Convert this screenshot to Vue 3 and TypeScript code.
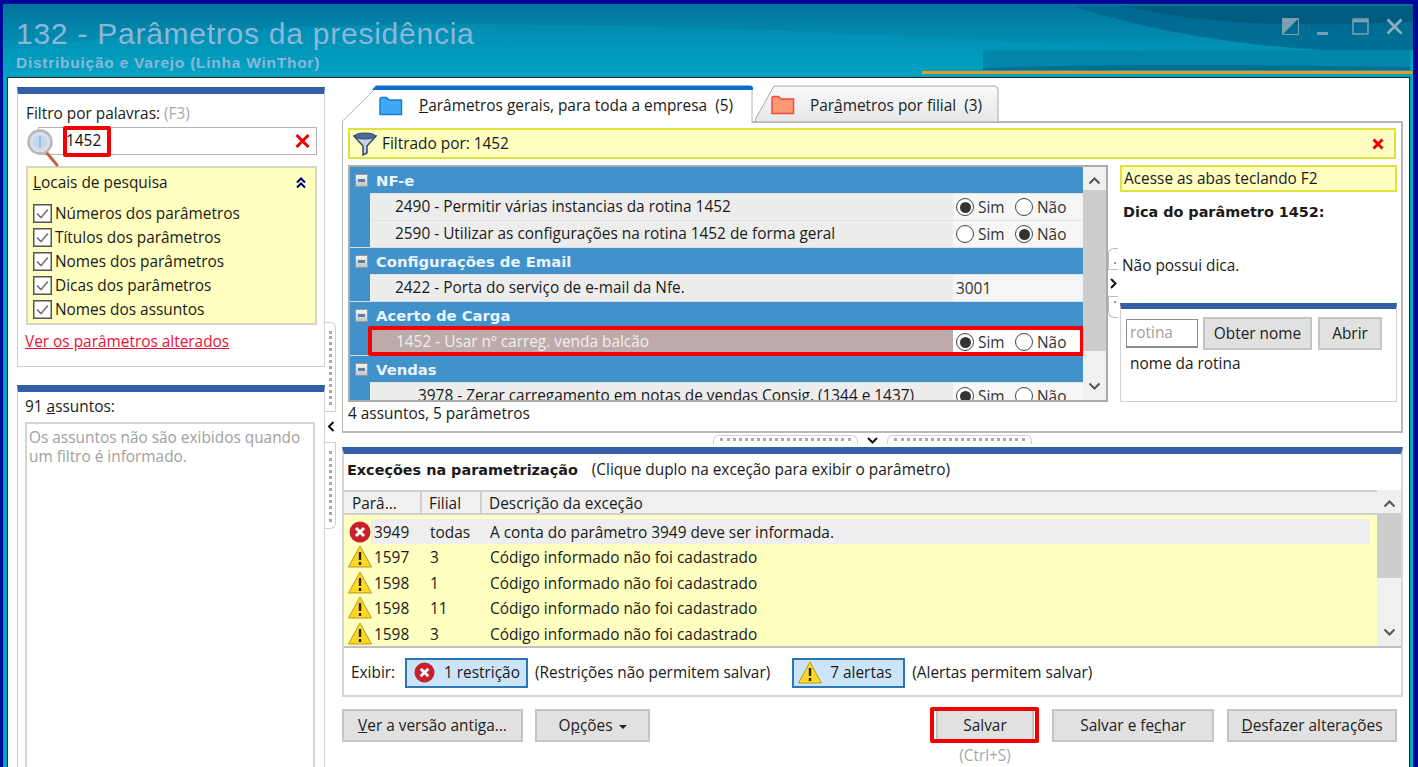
<template>
  <div class="window">
    <div class="frame">
      <!-- faixa do titulo -->
      <header class="titlebar">
        <svg class="swoosh" viewBox="0 0 1410 74" preserveAspectRatio="none">
          <path d="M0 46C300 10 620 14 1170 47L1410 47V74H0Z" fill="#00a0c0" opacity=".35" />
          <path d="M1070 2C1130 22 1220 42 1330 47H1410V2Z" fill="#00648c" opacity=".75" />
          <path d="M1120 2C1200 20 1280 24 1410 18V2Z" fill="#00506f" opacity=".55" />
          <path d="M980 47H1407V67H980Z" fill="#0086ab" />
          <path d="M980 65C1120 60 1280 62 1407 64V67H980Z" fill="#006e94" />
          <path d="M919 68H1410V71H919Z" fill="#e89a24" />
        </svg>
        <h1 class="app-title">132 - Parâmetros da presidência</h1>
        <div class="app-sub">Distribuição e Varejo (Linha WinThor)</div>
        <div class="win-buttons">
          <svg width="17" height="17" viewBox="0 0 17 17"><path d="M.5.5h16v16H.5Z" fill="none" stroke="#7d9fb2" /><path d="M1 1h15L1 16Z" fill="#7d9fb2" /></svg>
          <svg class="min" width="11" height="3" viewBox="0 0 11 3"><rect width="11" height="3" fill="#7d9fb2" /></svg>
          <svg width="17" height="17" viewBox="0 0 17 17"><path d="M1 1h15v15H1Z" fill="none" stroke="#7d9fb2" stroke-width="1.5" /><path d="M1 3h15" stroke="#7d9fb2" stroke-width="3" /></svg>
          <svg width="17" height="17" viewBox="0 0 17 17"><path d="M1.500 1.500l14 14M15.500 1.500l-14 14" stroke="#8fb0c2" stroke-width="2.600" /></svg>
        </div>
      </header>

      <div class="content">
        <!-- coluna esquerda -->
        <aside class="left-col">
          <section class="panel filter-panel">
            <label class="lbl">Filtro por palavras: <span class="muted">(F3)</span></label>
            <div class="search-row">
              <svg class="magnifier" width="34" height="40" viewBox="0 0 34 40">
                <path d="M19 24l11 13" stroke="#c0623a" stroke-width="3" stroke-linecap="round" />
                <circle cx="13" cy="14" r="11.500" fill="#d6e2f0" stroke="#b8b8b8" stroke-width="2.500" />
                <circle cx="13" cy="14" r="7" fill="#c4d6ea" />
                <path d="M13 8v12" stroke="#9db6d0" stroke-width="1.500" />
              </svg>
              <div class="search-input">
                <span class="search-value">1452</span>
                <span class="hl hl-search"></span>
                <svg class="x-red" width="15" height="14" viewBox="0 0 15 14"><path d="M1.500 1l12 12M13.500 1l-12 12" stroke="#f00000" stroke-width="3" /></svg>
              </div>
            </div>
            <div class="places">
              <div class="places-head">
                <span><u>L</u>ocais de pesquisa</span>
                <svg width="12" height="12" viewBox="0 0 12 12"><path d="M2 5.500l4-4 4 4M2 10.500l4-4 4 4" fill="none" stroke="#00007f" stroke-width="2" /></svg>
              </div>
              <div v-for="place in places" :key="place" class="check-row">
                <svg width="19" height="19" viewBox="0 0 19 19">
                  <rect x=".75" y=".75" width="17.500" height="17.500" fill="#fff" stroke="#555" stroke-width="1.500" />
                  <path d="M4 9.500l4 4 7-8" fill="none" stroke="#707070" stroke-width="1.600" />
                </svg>
                <span>{{ place }}</span>
              </div>
            </div>
            <a class="changed-link">Ver os parâmetros alterados</a>
          </section>

          <section class="panel subjects-panel">
            <label class="lbl">91 <u>a</u>ssuntos:</label>
            <div class="subjects-box">Os assuntos não são exibidos quando um filtro é informado.</div>
          </section>
        </aside>

        <!-- divisor vertical -->
        <div class="v-split">
          <div class="grip grip-top"></div>
          <svg class="split-arrow" width="8" height="11" viewBox="0 0 8 11"><path d="M6.500 1L2 5.500 6.500 10" fill="none" stroke="#111" stroke-width="2" /></svg>
          <div class="grip grip-bottom"></div>
        </div>

        <!-- coluna direita -->
        <main class="right-col">
          <div class="tabs">
            <div class="tab tab-active">
              <svg class="tab-shape" width="412" height="38" viewBox="0 0 412 38">
                <path d="M.5 38V36L34 3H410V38" fill="#fff" stroke="#b4b4b4" />
                <path d="M34 .5h374a3 3 0 0 1 3 3V5H30Z" fill="#0a6fc8" />
              </svg>
              <svg class="folder" width="24" height="20" viewBox="0 0 24 20">
                <path d="M1 3a1.500 1.500 0 0 1 1.500-1.500h5L10 4h12.500v14.500H1Z" fill="#3fa9f5" stroke="#0f7fe0" stroke-width="1.500" />
              </svg>
              <span class="tab-text"><u>P</u>arâmetros gerais, para toda a empresa&nbsp; (5)</span>
            </div>
            <div class="tab tab-second">
              <svg class="tab-shape" width="245" height="37" viewBox="0 0 245 37">
                <defs><linearGradient id="tabfill" x1="0" y1="0" x2="0" y2="1"><stop offset="0" stop-color="#fafafa" /><stop offset="1" stop-color="#e6e6e6" /></linearGradient></defs>
                <path d="M.5 37V34L19 1H239a4 4 0 0 1 4 4V37Z" fill="url(#tabfill)" stroke="#a8a8a8" />
              </svg>
              <svg class="folder" width="24" height="20" viewBox="0 0 24 20">
                <path d="M1 3a1.500 1.500 0 0 1 1.500-1.500h5L10 4h12.500v14.500H1Z" fill="#ff9a76" stroke="#f4483c" stroke-width="1.500" />
              </svg>
              <span class="tab-text">Par<u>â</u>metros por filial&nbsp; (3)</span>
            </div>
          </div>

          <div class="tab-panel">
            <div class="filter-bar">
              <svg width="24" height="24" viewBox="0 0 24 24">
                <path d="M1 4l9 10v9l4-2v-7l9-10Z" fill="#c8d2e2" stroke="#334a68" stroke-width="1.500" />
                <ellipse cx="12" cy="4" rx="10.500" ry="3" fill="#4f6c96" stroke="#334a68" />
              </svg>
              <span>Filtrado por: 1452</span>
              <svg class="bar-x" width="12" height="12" viewBox="0 0 12 12"><path d="M1.500 1.500l9 9M10.500 1.500l-9 9" stroke="#f00000" stroke-width="3" /></svg>
            </div>

            <div class="params-area">
              <div class="tree-wrap">
                <div class="tree">
                  <div class="tree-list">
                    <template v-for="group in groups" :key="group.title">
                      <div class="group-head">
                        <span class="minus"></span>
                        <span>{{ group.title }}</span>
                      </div>
                      <div v-for="p in group.params" :key="p.id" class="param-row" :class="{ selected: p.selected }">
                        <div class="param-name" :style="{ paddingLeft: p.indent + 'px' }">{{ p.id }} - {{ p.text }}</div>
                        <div class="param-value">
                          <template v-if="p.value">{{ p.value }}</template>
                          <template v-else>
                            <span class="radio" :class="{ on: p.sim }"></span><span class="r-label">Sim</span>
                            <span class="radio" :class="{ on: !p.sim }"></span><span>Não</span>
                          </template>
                        </div>
                        <span v-if="p.selected" class="hl hl-row"></span>
                      </div>
                    </template>
                  </div>
                  <div class="scrollbar">
                    <svg class="sb-arrow" width="13" height="9" viewBox="0 0 13 9"><path d="M1.500 7.500l5-5 5 5" fill="none" stroke="#555" stroke-width="2" /></svg>
                    <div class="sb-thumb tree-thumb"></div>
                    <svg class="sb-arrow sb-down" width="13" height="9" viewBox="0 0 13 9"><path d="M1.500 1.500l5 5 5-5" fill="none" stroke="#555" stroke-width="2" /></svg>
                  </div>
                </div>
                <div class="count">4 assuntos, 5 parâmetros</div>
              </div>

              <div class="inner-split">
                <div class="mini-grip"></div>
                <svg class="inner-arrow" width="7" height="11" viewBox="0 0 7 11"><path d="M1 1l4.500 4.500L1 10" fill="none" stroke="#111" stroke-width="2" /></svg>
                <div class="mini-grip mini-low"></div>
              </div>

              <div class="side">
                <div class="hint-box">Acesse as abas teclando F2</div>
                <div class="tip-title">Dica do parâmetro 1452:</div>
                <div class="tip-text">Não possui dica.</div>
                <div class="routine">
                  <div class="routine-row">
                    <span class="routine-input">rotina</span>
                    <button class="btn routine-btn get">Obter nome</button>
                    <button class="btn routine-btn open">Abrir</button>
                  </div>
                  <div class="routine-name">nome da rotina</div>
                </div>
              </div>
            </div>
          </div>

          <!-- divisor horizontal -->
          <div class="h-split">
            <div class="h-grip"></div>
            <svg width="11" height="7" viewBox="0 0 11 7"><path d="M1 1l4.500 4.500L10 1" fill="none" stroke="#111" stroke-width="2" /></svg>
            <div class="h-grip"></div>
          </div>

          <section class="panel exceptions">
            <div class="exc-title"><b>Exceções na parametrização</b><span>(Clique duplo na exceção para exibir o parâmetro)</span></div>
            <div class="exc-table">
              <div class="exc-main">
                <div class="exc-head">
                  <div class="c-param">Parâ...</div>
                  <div class="c-branch">Filial</div>
                  <div class="c-desc">Descrição da exceção</div>
                </div>
                <div class="exc-rows">
                  <div v-for="(row, i) in exceptions" :key="i" class="exc-row" :class="{ first: row.error }">
                    <svg v-if="row.error" class="row-icon" width="22" height="22" viewBox="0 0 22 22">
                      <circle cx="11" cy="11" r="10.500" fill="#c8202c" />
                      <path d="M7 7l8 8M15 7l-8 8" stroke="#fff" stroke-width="3" />
                    </svg>
                    <svg v-else class="row-icon" width="24" height="23" viewBox="0 0 24 23">
                      <path d="M12 1L23.500 22H.5Z" fill="#ffd820" stroke="#b8962a" />
                      <path d="M12 7v8M12 17v3" stroke="#222" stroke-width="2.400" />
                    </svg>
                    <div class="c-param cell-num">{{ row.param }}</div>
                    <div class="c-branch cell-branch">{{ row.branch }}</div>
                    <div class="c-desc cell-desc" :class="{ shaded: row.error }">{{ row.text }}</div>
                  </div>
                </div>
              </div>
              <div class="scrollbar exc-scroll">
                <svg class="sb-arrow" width="13" height="9" viewBox="0 0 13 9"><path d="M1.500 7.500l5-5 5 5" fill="none" stroke="#555" stroke-width="2" /></svg>
                <div class="sb-thumb exc-thumb"></div>
                <svg class="sb-arrow sb-down" width="13" height="9" viewBox="0 0 13 9"><path d="M1.500 1.500l5 5 5-5" fill="none" stroke="#555" stroke-width="2" /></svg>
              </div>
            </div>
            <div class="show-row">
              <span class="show-label">Exibir:</span>
              <div class="toggle t-err">
                <svg width="21" height="21" viewBox="0 0 22 22">
                  <circle cx="11" cy="11" r="10.500" fill="#c8202c" />
                  <path d="M7 7l8 8M15 7l-8 8" stroke="#fff" stroke-width="3" />
                </svg>
                <span>1 restrição</span>
              </div>
              <span class="show-note n-err">(Restrições não permitem salvar)</span>
              <div class="toggle t-warn">
                <svg width="24" height="23" viewBox="0 0 24 23">
                  <path d="M12 1L23.500 22H.5Z" fill="#ffd820" stroke="#b8962a" />
                  <path d="M12 7v8M12 17v3" stroke="#222" stroke-width="2.400" />
                </svg>
                <span>7 alertas</span>
              </div>
              <span class="show-note">(Alertas permitem salvar)</span>
            </div>
          </section>

          <footer class="actions">
            <button class="btn act old"><u>V</u>er a versão antiga...</button>
            <button class="btn act options">O<u>p</u>ções <i class="caret"></i></button>
            <div class="save-wrap">
              <button class="btn act save">Salvar</button>
              <span class="hl hl-save"></span>
              <span class="save-hint">(Ctrl+S)</span>
            </div>
            <button class="btn act save-close">Salvar e fe<u>c</u>har</button>
            <button class="btn act undo"><u>D</u>esfazer alterações</button>
          </footer>
        </main>
      </div>
    </div>
  </div>
</template>

<script setup lang="ts">
interface Param {
  id: number;
  text: string;
  indent: number;
  sim?: boolean;
  value?: string;
  selected?: boolean;
}

interface Group {
  title: string;
  params: Param[];
}

interface ExceptionRow {
  param: number;
  branch: string;
  text: string;
  error?: boolean;
}

const places: string[] = [
  'Números dos parâmetros',
  'Títulos dos parâmetros',
  'Nomes dos parâmetros',
  'Dicas dos parâmetros',
  'Nomes dos assuntos',
];

const groups: Group[] = [
  {
    title: 'NF-e',
    params: [
      { id: 2490, text: 'Permitir várias instancias da rotina 1452', indent: 25, sim: true },
      { id: 2590, text: 'Utilizar as configurações na rotina 1452 de forma geral', indent: 25, sim: false },
    ],
  },
  {
    title: 'Configurações de Email',
    params: [{ id: 2422, text: 'Porta do serviço de e-mail da Nfe.', indent: 25, value: '3001' }],
  },
  {
    title: 'Acerto de Carga',
    params: [{ id: 1452, text: 'Usar nº carreg. venda balcão', indent: 26, sim: true, selected: true }],
  },
  {
    title: 'Vendas',
    params: [{ id: 3978, text: 'Zerar carregamento em notas de vendas Consig. (1344 e 1437)', indent: 48, sim: true }],
  },
];

const exceptions: ExceptionRow[] = [
  { param: 3949, branch: 'todas', text: 'A conta do parâmetro 3949 deve ser informada.', error: true },
  { param: 1597, branch: '3', text: 'Código informado não foi cadastrado' },
  { param: 1598, branch: '1', text: 'Código informado não foi cadastrado' },
  { param: 1598, branch: '11', text: 'Código informado não foi cadastrado' },
  { param: 1598, branch: '3', text: 'Código informado não foi cadastrado' },
];
</script>

<style>
html,
body {
  margin: 0;
  overflow: hidden;
}
</style>

<style scoped>
.window {
  width: 1418px;
  height: 767px;
  box-sizing: border-box;
  padding: 4px 5px 0 3px;
  background: #00089a;
  overflow: hidden;
  font-family: "Open Sans", "Noto Sans", sans-serif;
  font-size: 15.400px;
  color: #1a1a1a;
}

.frame {
  height: 100%;
  box-sizing: border-box;
  padding: 0 3px 0 4px;
  background: linear-gradient(180deg, #02749c 0, #02a6c6 74px, #02a6c6 100%);
  display: flex;
  flex-direction: column;
}

.titlebar {
  position: relative;
  height: 73px;
  margin: 0 -3px 0 -4px;
  padding: 14px 0 0 13px;
  box-sizing: border-box;
  flex: none;
  color: #8db6da;
}

.swoosh {
  position: absolute;
  inset: 0;
  width: 100%;
  height: 100%;
}

.app-title {
  position: relative;
  margin: 0;
  font: 400 30px/32px "Liberation Sans", sans-serif;
  letter-spacing: 0.75px;
}

.app-sub {
  position: relative;
  margin-top: 4px;
  font: 700 15.500px/17px "Liberation Sans", sans-serif;
  letter-spacing: 0.75px;
}

.win-buttons {
  position: absolute;
  top: 14px;
  right: 10px;
  display: flex;
  align-items: center;
  gap: 17px;
}

.win-buttons .min {
  margin-top: 14px;
  margin-left: 1px;
  margin-right: 7px;
}

.content {
  flex: 1;
  min-height: 0;
  display: flex;
  box-sizing: border-box;
  padding: 7px 6px 0 9px;
  background: #fff;
  border: 1px solid #222;
  border-bottom: none;
}

.left-col {
  width: 308px;
  flex: none;
  padding-top: 2px;
}

.panel {
  box-sizing: border-box;
  border: 1px solid #cfcfcf;
  border-top: 7px solid #345fa8;
  background: #fff;
}

.filter-panel {
  height: 280px;
  padding: 10px 7px 0 8px;
}

.lbl {
  display: block;
  line-height: 19px;
}

.muted {
  color: #a8a8a8;
}

.search-row {
  position: relative;
  height: 39px;
  margin-top: 4px;
}

.magnifier {
  position: absolute;
  top: 1px;
  left: 1px;
  z-index: 1;
}

.search-input {
  position: absolute;
  left: 12px;
  right: 0;
  top: 0;
  height: 28px;
  box-sizing: border-box;
  border: 1px solid #b4b4b4;
  line-height: 26px;
  padding-left: 27px;
}

.search-value {
  color: #111;
}

.x-red {
  position: absolute;
  right: 6px;
  top: 6px;
}

.hl {
  position: absolute;
  box-sizing: border-box;
  border: 4px solid #f40000;
  border-radius: 2px;
  pointer-events: none;
}

.hl-search {
  left: 24px;
  top: -2px;
  width: 48px;
  height: 31px;
}

.places {
  height: 159px;
  box-sizing: border-box;
  padding: 4px 7px 0 5px;
  background: #ffffc0;
  border: 2px solid #d6d6c8;
}

.places-head {
  display: flex;
  justify-content: space-between;
  align-items: center;
  line-height: 22px;
  margin-bottom: 7px;
}

.places-head svg {
  margin-right: 1px;
}

.check-row {
  display: flex;
  align-items: center;
  gap: 3px;
  height: 24px;
}

.changed-link {
  display: block;
  margin-top: 7px;
  margin-left: -1px;
  color: #f01030;
  line-height: 20px;
  text-decoration: underline;
}

.subjects-panel {
  height: 420px;
  margin-top: 18px;
  padding: 5px 9px 0 7px;
}

.subjects-box {
  height: 360px;
  margin-top: 6px;
  box-sizing: border-box;
  padding: 4px 2px;
  border: 2px solid #d4d4d4;
  color: #a0a0a0;
  line-height: 19px;
}

.v-split {
  width: 17px;
  flex: none;
  padding-top: 237px;
  box-sizing: border-box;
}

.grip {
  width: 11px;
  box-sizing: border-box;
  border: 1px solid #cfcfcf;
  border-left: none;
  position: relative;
}

.grip::after {
  content: "";
  position: absolute;
  top: 8px;
  bottom: 6px;
  left: 4px;
  border-left: 3px dotted #a8a8a8;
}

.grip-top {
  height: 90px;
  border-radius: 0 6px 0 0;
}

.grip-bottom {
  height: 87px;
  border-radius: 0 0 6px 0;
}

.split-arrow {
  display: block;
  margin: 9px 0 10px 2px;
}

.right-col {
  width: 1061px;
  flex: none;
  min-width: 0;
}

.tabs {
  display: flex;
  height: 37px;
  position: relative;
  z-index: 1;
  margin-bottom: -1px;
}

.tab {
  position: relative;
  display: flex;
  align-items: center;
}

.tab-shape {
  position: absolute;
  top: 0;
  left: 0;
}

.tab-active {
  width: 412px;
  height: 38px;
  padding-left: 37px;
  padding-top: 3px;
  box-sizing: border-box;
}

.tab-second {
  width: 245px;
  height: 37px;
  margin-left: 1px;
  padding-left: 16px;
  padding-top: 3px;
  box-sizing: border-box;
  color: #222;
}

.folder,
.tab-text {
  position: relative;
}

.tab-text {
  margin-left: 16px;
  white-space: nowrap;
}

.tab-second .tab-text {
  margin-left: 15px;
}

.tab-panel {
  height: 312px;
  box-sizing: border-box;
  padding: 5px 5px 0 5px;
  border: 1px solid #b8b8b8;
  border-width: 2px 2px 2px 1px;
}

.filter-bar {
  height: 31px;
  box-sizing: border-box;
  display: flex;
  align-items: center;
  gap: 5px;
  padding: 0 10px 0 3px;
  background: #ffffc0;
  border: 2px solid #e2e23c;
}

.bar-x {
  margin-left: auto;
}

.params-area {
  display: flex;
  margin-top: 6px;
}

.tree-wrap {
  width: 760px;
  flex: none;
}

.tree {
  height: 237px;
  box-sizing: border-box;
  border: 2px solid #ababab;
  display: flex;
  overflow: hidden;
}

.tree-list {
  width: 733px;
  flex: none;
  overflow: hidden;
}

.group-head {
  height: 27px;
  box-sizing: border-box;
  display: flex;
  align-items: center;
  gap: 8px;
  padding-left: 5px;
  background: #4191cb;
  border-top: 1px solid #d8dde2;
  color: #e8f4ff;
  font-family: "DejaVu Sans", sans-serif;
  font-weight: 700;
  font-size: 14.800px;
}

.group-head:first-child {
  border-top: none;
  height: 26px;
}

.minus {
  width: 13px;
  height: 13px;
  box-sizing: border-box;
  background: linear-gradient(#f4f4f4, #c4c4c4);
  border: 1px solid #999;
  position: relative;
}

.minus::after {
  content: "";
  position: absolute;
  left: 2px;
  right: 2px;
  top: 4px;
  height: 3px;
  background: #5a7fa8;
}

.param-row {
  position: relative;
  height: 27px;
  margin-left: 20px;
  display: flex;
  background: #ededed;
  border-top: 1px solid #e2e2e2;
  box-sizing: border-box;
  box-shadow: -20px 0 0 #4191cb;
}

.param-row.selected {
  background: #bcabaa;
  color: #f2eeee;
}

.param-name {
  flex: 1;
  line-height: 26px;
  white-space: nowrap;
}

.param-value {
  width: 130px;
  flex: none;
  display: flex;
  align-items: center;
  box-sizing: border-box;
  padding-left: 3px;
  background: #f6f6f6;
  color: #333;
  margin-left: 3px;
}

.selected .param-value {
  background: #fff;
}

.radio {
  width: 18px;
  height: 18px;
  flex: none;
  box-sizing: border-box;
  border: 1.500px solid #444;
  border-radius: 50%;
  background: #fff;
  margin-right: 4px;
  position: relative;
}

.radio.on::after {
  content: "";
  position: absolute;
  inset: 2.500px;
  border-radius: 50%;
  background: #333;
}

.r-label {
  width: 37px;
  flex: none;
}

.hl-row {
  left: -2px;
  right: -1px;
  top: -3px;
  bottom: -1px;
}

.scrollbar {
  position: relative;
  flex: 1;
  background: #f0f0f0;
  display: flex;
  flex-direction: column;
  align-items: center;
}

.sb-arrow {
  margin-top: 9px;
  flex: none;
}

.sb-down {
  position: absolute;
  bottom: 9px;
  margin: 0;
}

.sb-thumb {
  background: #cdcdcd;
  width: 100%;
  margin-top: 5px;
}

.tree-thumb {
  height: 161px;
}

.count {
  line-height: 23px;
}

.inner-split {
  width: 12px;
  flex: none;
  padding-top: 83px;
  box-sizing: border-box;
}

.mini-grip {
  position: relative;
  width: 10px;
  height: 22px;
  box-sizing: border-box;
  border: 1px solid #bcbcbc;
  border-right: none;
  border-radius: 6px 0 0 0;
}

.mini-grip::after {
  content: "";
  position: absolute;
  left: 5px;
  top: 13px;
  width: 2px;
  height: 2px;
  background: #999;
}

.mini-low {
  border-radius: 0 0 0 6px;
}

.mini-low::after {
  top: 4px;
}

.inner-arrow {
  display: block;
  margin: 8px 0 7px 2px;
}

.side {
  width: 277px;
  flex: none;
}

.hint-box {
  height: 27px;
  box-sizing: border-box;
  padding-left: 2px;
  line-height: 23px;
  background: #ffffc0;
  border: 2px solid #e2e23c;
  margin-bottom: 10px;
}

.tip-title {
  font-family: "DejaVu Sans", sans-serif;
  font-size: 14.400px;
  font-weight: 700;
  padding-left: 3px;
  line-height: 20px;
}

.tip-text {
  margin-top: 34px;
  padding-left: 2px;
  line-height: 20px;
}

.routine {
  margin-top: 27px;
  height: 99px;
  box-sizing: border-box;
  border: 1px solid #cfcfcf;
  border-top: 6px solid #345fa8;
  padding: 8px 5px 0;
}

.routine-row {
  display: flex;
  align-items: center;
  gap: 5px;
}

.routine-input {
  width: 72px;
  height: 29px;
  box-sizing: border-box;
  border: 1px solid #8e8e8e;
  border-bottom-width: 2px;
  padding-left: 3px;
  line-height: 26px;
  color: #a0a0a0;
}

.btn {
  box-sizing: border-box;
  background: #e1e1e1;
  border: 2px solid #c4c4c4;
  font: inherit;
  color: #222;
  padding: 0;
  white-space: nowrap;
}

.routine-btn {
  height: 33px;
}

.get {
  width: 109px;
}

.open {
  width: 64px;
  margin-left: 1px;
}

.routine-name {
  margin: 4px 0 0 4px;
  line-height: 20px;
}

.h-split {
  height: 14px;
  display: flex;
  align-items: center;
  padding-left: 371px;
  gap: 9px;
}

.h-grip {
  width: 145px;
  height: 9px;
  box-sizing: border-box;
  border: 1px solid #cfcfcf;
  border-bottom: none;
  border-radius: 6px 6px 0 0;
  margin-top: -2px;
  position: relative;
}

.h-grip::after {
  content: "";
  position: absolute;
  left: 6px;
  right: 6px;
  top: 2px;
  border-top: 3px dotted #a8a8a8;
}

.exceptions {
  height: 250px;
  border-width: 7px 2px 2px 2px;
  border-color: #345fa8 #d6d6d6 #d6d6d6 #d6d6d6;
}

.exc-title {
  height: 36px;
  padding: 6px 0 0 3px;
  box-sizing: border-box;
  display: flex;
  gap: 14px;
  line-height: 20px;
}

.exc-title b {
  font-family: "DejaVu Sans", sans-serif;
  font-size: 14.400px;
}

.exc-table {
  display: flex;
  border-bottom: 2px solid #c0c0c0;
  height: 156px;
}

.exc-main {
  width: 1033px;
  flex: none;
  overflow: hidden;
}

.exc-head {
  height: 25px;
  display: flex;
  box-sizing: border-box;
  background: #f0f0f0;
  border-top: 2px solid #d0d0d0;
  border-bottom: 2px solid #d0d0d0;
  line-height: 23px;
}

.exc-head .c-param {
  border-right: 2px solid #d0d0d0;
  padding-left: 8px;
}

.exc-head .c-branch {
  border-right: 2px solid #d0d0d0;
  padding-left: 7px;
}

.exc-head .c-desc {
  padding-left: 7px;
}

.c-param {
  width: 78px;
  flex: none;
  box-sizing: border-box;
}

.c-branch {
  width: 60px;
  flex: none;
  box-sizing: border-box;
}

.c-desc {
  flex: 1;
  box-sizing: border-box;
}

.exc-rows {
  height: 131px;
  padding-top: 4px;
  box-sizing: border-box;
  background: #ffffc0;
  overflow: hidden;
}

.exc-row {
  position: relative;
  height: 25.400px;
  display: flex;
  line-height: 28px;
  padding-right: 7px;
}

.row-icon {
  position: absolute;
  left: 4px;
  top: 1px;
}

.exc-row.first .row-icon {
  left: 5px;
  top: 2px;
}

.cell-num {
  padding-left: 30px;
}

.cell-branch {
  padding-left: 8px;
}

.cell-desc {
  padding-left: 8px;
}

.exc-row.first .cell-num {
  background: #eeeeee;
  margin-left: 27px;
  width: 51px;
  padding-left: 3px;
}

.exc-row.first .cell-branch {
  background: #eeeeee;
}

.shaded {
  background: #eeeeee;
}

.exc-scroll {
  flex: 1;
}

.exc-thumb {
  height: 65px;
}

.show-row {
  height: 49px;
  display: flex;
  align-items: center;
  padding-left: 7px;
}

.show-label {
  width: 54px;
  flex: none;
}

.toggle {
  height: 30px;
  box-sizing: border-box;
  display: flex;
  align-items: center;
  background: #cce4f7;
  border: 2px solid #2a78b8;
  white-space: nowrap;
}

.t-err {
  width: 123px;
  padding-left: 7px;
  gap: 9px;
}

.t-warn {
  width: 113px;
  margin-left: 22px;
  padding-left: 4px;
  gap: 8px;
}

.show-note {
  margin-left: 7px;
}

.actions {
  display: flex;
  align-items: flex-start;
  margin-top: 12px;
}

.act {
  height: 33px;
}

.old {
  width: 181px;
}

.options {
  width: 115px;
  margin-left: 12px;
}

.caret {
  display: inline-block;
  margin-left: 2px;
  vertical-align: 2px;
  border: 4px solid transparent;
  border-top-color: #222;
  border-bottom: none;
}

.save-wrap {
  position: relative;
  margin-left: 286px;
  width: 98px;
  text-align: center;
}

.save {
  width: 98px;
  display: block;
}

.hl-save {
  left: -6px;
  right: -5px;
  top: -2px;
  height: 36px;
}

.save-hint {
  display: block;
  color: #a8a8a8;
  margin-top: 4px;
  line-height: 20px;
}

.save-close {
  width: 162px;
  margin-left: 18px;
}

.undo {
  width: 170px;
  margin-left: 13px;
}
</style>
